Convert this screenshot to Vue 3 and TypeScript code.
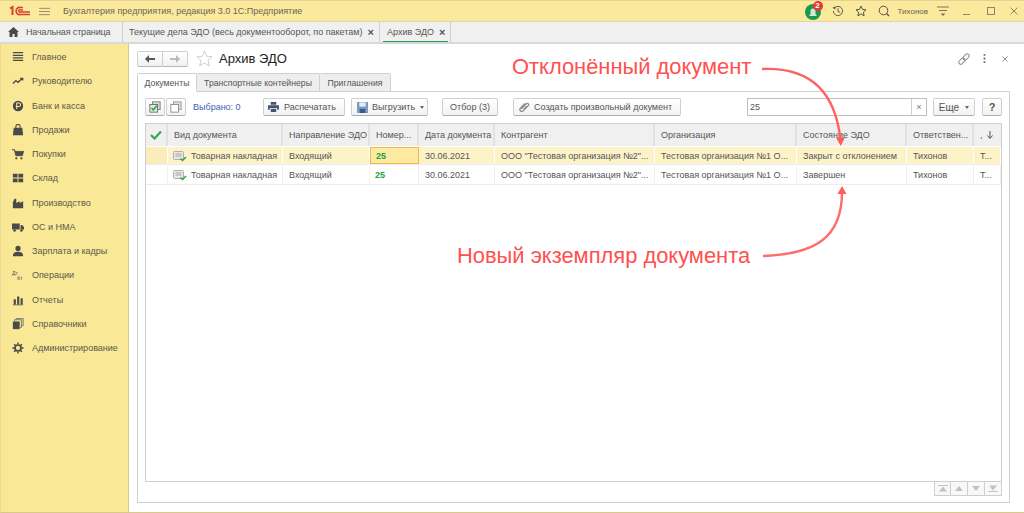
<template>
  <div class="app">
    <header class="titlebar">
      <svg class="logo" width="22" height="12" viewBox="0 0 22 12">
        <path d="M1 3.500 3.500 2V10" fill="none" stroke="#d6402f" stroke-width="2" />
        <path d="M21 9.500H11.500A3.600 3.600 0 1 1 11.500 2.500H14" fill="none" stroke="#d6402f" stroke-width="1.600" />
        <path d="M21 7H11.500A1.200 1.200 0 1 1 11.500 5H14" fill="none" stroke="#d6402f" stroke-width="1.400" />
      </svg>
      <svg class="burger" width="11" height="9" viewBox="0 0 12 10">
        <path d="M0 1.500H12M0 5H12M0 8.500H12" stroke="#8a856a" stroke-width="1" />
      </svg>
      <span class="app-title">Бухгалтерия предприятия, редакция 3.0 1С:Предприятие</span>
      <div class="spacer"></div>
      <div class="bell">
        <svg width="16" height="16" viewBox="0 0 16 16">
          <circle cx="8" cy="8" r="8" fill="#1b9a4b" />
          <path d="M4 12h8l-1.500-2V7a2.500 2.500 0 0 0-5 0v3z" fill="#cfe9d5" />
        </svg>
        <span class="badge">2</span>
      </div>
      <svg class="t-ico hist" width="12" height="12" viewBox="0 0 13 13">
        <path d="M2.500 3.500A5 5 0 1 1 1.500 6.500M6.500 3.500V7L9 8" fill="none" stroke="#55524a" stroke-width="1" />
        <path d="M0.500 3 3.500 1.500V5z" fill="#55524a" />
      </svg>
      <svg class="t-ico star" width="12" height="12" viewBox="0 0 12 12">
        <path d="M6 1 7.500 4.400 11 4.800 8.400 7.200 9.100 10.800 6 9 2.900 10.800 3.600 7.200 1 4.800 4.500 4.400z" fill="none" stroke="#55524a" />
      </svg>
      <svg class="t-ico find" width="12" height="12" viewBox="0 0 12 12">
        <circle cx="5.500" cy="5.500" r="4.300" fill="none" stroke="#55524a" />
        <path d="M8.500 8.500 11 11" stroke="#55524a" stroke-width="1.300" />
      </svg>
      <span class="user">Тихонов</span>
      <svg class="t-ico filter" width="12" height="10" viewBox="0 0 12 10">
        <path d="M0 1H12M2 4.500H10" stroke="#7a765e" />
        <path d="M3.500 7.500H8.500L6 10z" fill="#7a765e" />
      </svg>
      <svg class="t-ico win-min" width="7" height="7" viewBox="0 0 7 7"><path d="M0 6.500H7" stroke="#8a856a" /></svg>
      <svg class="t-ico win-max" width="8" height="8" viewBox="0 0 8 8"><rect x="0.500" y="0.500" width="7" height="7" fill="none" stroke="#8a856a" /></svg>
      <svg class="t-ico win-close" width="8" height="8" viewBox="0 0 8 8"><path d="M0.500 0.500 7.500 7.500M7.500 0.500 0.500 7.500" stroke="#8a856a" /></svg>
    </header>

    <nav class="tabbar">
      <div class="top-tab home">
        <svg width="11" height="10" viewBox="0 0 11 10">
          <path d="M5.500 0 11 5H9.500V10H6.500V7H4.500V10H1.500V5H0z" fill="#4a4a4a" />
        </svg>
        <span>Начальная страница</span>
      </div>
      <div class="top-tab docs">
        <span>Текущие дела ЭДО (весь документооборот, по пакетам)</span>
        <b class="x">×</b>
      </div>
      <div class="top-tab archive">
        <span>Архив ЭДО</span>
        <b class="x">×</b>
      </div>
    </nav>

    <div class="body">
      <aside class="sidebar">
        <div v-for="item in menu" :key="item.label" class="menu-row">
          <svg class="menu-ico" width="12" height="12" viewBox="0 0 14 14" v-html="item.icon"></svg>
          <span>{{ item.label }}</span>
        </div>
      </aside>

      <main class="content">
        <div class="form-head">
          <div class="nav-btns">
            <button class="nav-btn">
              <svg width="10" height="8" viewBox="0 0 10 8"><path d="M0 4 4 0V3H10V5H4V8z" fill="#555" /></svg>
            </button>
            <button class="nav-btn">
              <svg width="10" height="8" viewBox="0 0 10 8"><path d="M10 4 6 0V3H0V5H6V8z" fill="#bbb" /></svg>
            </button>
          </div>
          <svg class="fav" width="17" height="17" viewBox="0 0 17 17">
            <path d="M8.500 1 10.700 6.300 16 6.700 12 10.300 13.300 16 8.500 13 3.700 16 5 10.300 1 6.700 6.300 6.300z" fill="#fff" stroke="#cfcfcf" />
          </svg>
          <h1>Архив ЭДО</h1>
          <div class="spacer"></div>
          <svg class="head-ico" width="12" height="12" viewBox="0 0 12 12">
            <g transform="rotate(-45 6 6)" fill="none" stroke="#8a8a8a">
              <rect x="-0.500" y="4" width="7" height="4" rx="2" />
              <rect x="5.500" y="4" width="7" height="4" rx="2" />
            </g>
          </svg>
          <svg class="head-ico dots" width="3" height="9" viewBox="0 0 3 10">
            <path d="M0.500 0H2.500V2H0.500zM0.500 4H2.500V6H0.500zM0.500 8H2.500V10H0.500z" fill="#707070" />
          </svg>
          <svg class="head-ico close" width="6" height="6" viewBox="0 0 7 7"><path d="M0.500 0.500 6.500 6.500M6.500 0.500 0.500 6.500" stroke="#808080" /></svg>
        </div>

        <div class="form-tabs">
          <div class="form-tab active">Документы</div>
          <div class="form-tab">Транспортные контейнеры</div>
          <div class="form-tab">Приглашения</div>
        </div>

        <section class="panel">
          <div class="toolbar">
            <button class="btn square">
              <svg width="12" height="12" viewBox="0 0 14 14">
                <rect x="4" y="1" width="9" height="9" fill="#d8d8d8" stroke="#777" />
                <rect x="1" y="4" width="9" height="9" fill="#dff0dc" stroke="#666" />
                <path d="M3 8 5 10.500 9 5.500" fill="none" stroke="#2da14a" stroke-width="1.800" />
              </svg>
            </button>
            <button class="btn square second">
              <svg width="12" height="12" viewBox="0 0 14 14">
                <rect x="4" y="1" width="9" height="9" fill="#ddd" stroke="#999" />
                <rect x="1" y="4" width="9" height="9" fill="#fff" stroke="#888" />
              </svg>
            </button>
            <span class="selected">Выбрано: 0</span>
            <button class="btn print">
              <svg width="11" height="10" viewBox="0 0 12 11">
                <path d="M3 0H9V3H3zM0 3.500H12V8.500H10V6.500H2V8.500H0zM3 7.500H9V11H3z" fill="#43566e" />
              </svg>
              Распечатать
            </button>
            <button class="btn upload">
              <svg width="11" height="11" viewBox="0 0 12 12">
                <rect width="12" height="12" fill="#7a9cc4" />
                <rect x="2.500" y="0.500" width="7" height="4.500" fill="#e6edf5" />
                <rect x="3" y="7.500" width="6" height="4.500" fill="#3d5a80" />
              </svg>
              Выгрузить
              <i class="caret"></i>
            </button>
            <button class="btn filter-btn">Отбор (3)</button>
            <button class="btn create">
              <svg width="11" height="12" viewBox="0 0 11 12">
                <path d="M2 8 7.500 2.500A1.500 1.500 0 0 1 9.500 4.500L4 10A2 2 0 0 1 1 7.500L6 2.500M4.500 8.500 8 5" fill="none" stroke="#8a8a8a" stroke-width="1.200" />
              </svg>
              Создать произвольный документ
            </button>
            <div class="spacer"></div>
            <div class="search">
              <span class="search-val">25</span>
              <span class="search-x">×</span>
            </div>
            <button class="btn more">Еще <i class="caret"></i></button>
            <button class="btn help">?</button>
          </div>

          <div class="table">
            <div class="grid head-row">
              <div class="cell check">
                <svg width="12" height="10" viewBox="0 0 12 10"><path d="M1 5 4.500 8.500 11 1.500" fill="none" stroke="#35a84f" stroke-width="2.200" /></svg>
              </div>
              <div v-for="col in columns" :key="col" class="cell">{{ col }}</div>
              <div class="cell sort">
                ,
                <svg width="6" height="8" viewBox="0 0 6 8"><path d="M3 0V7M0.500 4.500 3 7.500 5.500 4.500" fill="none" stroke="#555" /></svg>
              </div>
            </div>
            <div v-for="(row, i) in rows" :key="i" class="grid row" :class="{ current: i === 0 }">
              <div class="cell check"></div>
              <div class="cell doc">
                <svg width="14" height="12" viewBox="0 0 14 12">
                  <rect x="0.500" y="1.500" width="10" height="8" rx="1" fill="#e8e8e8" stroke="#b0b0b0" />
                  <path d="M2.500 4H8.500M2.500 6H8.500" stroke="#a5a5a5" />
                  <path d="M7.500 8.500 9.500 10.500 13 7" fill="none" stroke="#2da14a" stroke-width="1.500" />
                </svg>
                Товарная накладная
              </div>
              <div class="cell">Входящий</div>
              <div class="cell num" :class="{ focus: i === 0 }">25</div>
              <div class="cell">30.06.2021</div>
              <div class="cell">ООО "Тестовая организация №2"...</div>
              <div class="cell">Тестовая организация №1 О...</div>
              <div class="cell">{{ row }}</div>
              <div class="cell">Тихонов</div>
              <div class="cell">Т...</div>
            </div>
          </div>
          <div class="pager">
            <button v-for="p in pager" :key="p" class="page-btn">
              <svg width="10" height="7" viewBox="0 0 10 7"><path :d="p" fill="#c2c2c2" /></svg>
            </button>
          </div>
        </section>
      </main>
    </div>

    <div class="note note-top">Отклонённый документ</div>
    <div class="note note-bottom">Новый экземпляр документа</div>
    <svg class="arrows" width="1024" height="513" viewBox="0 0 1024 513">
      <path d="M762 69C806 67 835 88 840.500 140" fill="none" stroke="#ff6060" stroke-width="2.400" />
      <path d="M836 137.500 845 137.500 840.700 146z" fill="#ff5c5c" />
      <path d="M763 256C815 254 842 238 842 192" fill="none" stroke="#ff6c6c" stroke-width="2.400" />
      <path d="M837.500 194 846.500 194 842 186z" fill="#ff5c5c" />
    </svg>
  </div>
</template>

<script setup lang="ts">
const menu = [
  { label: "Главное", icon: '<path d="M1 2H13M1 5H13M1 8H13M1 11H13" stroke="#4a4a4a" stroke-width="1.500"/>' },
  { label: "Руководителю", icon: '<path d="M1 10 4.500 6.500 7 8.500 12 4M9.500 4H12.500V6.500" fill="none" stroke="#4a4a4a" stroke-width="1.500"/>' },
  { label: "Банк и касса", icon: '<circle cx="7" cy="7" r="6" fill="#4a4a4a"/><path d="M5.500 10.500V3.500H8A2 2 0 0 1 8 7.500H4.500" fill="none" stroke="#f9e896" stroke-width="1.200"/>' },
  { label: "Продажи", icon: '<path d="M2 4.500H12L13 13H1z" fill="#4a4a4a"/><path d="M4.500 5V3A2.500 2.500 0 0 1 9.500 3V5" fill="none" stroke="#4a4a4a" stroke-width="1.200"/>' },
  { label: "Покупки", icon: '<path d="M0 2H3L3.500 4H13.500L12 9H4.500L3 3" fill="#4a4a4a" stroke="#4a4a4a"/><circle cx="5" cy="12" r="1.300" fill="#4a4a4a"/><circle cx="11" cy="12" r="1.300" fill="#4a4a4a"/>' },
  { label: "Склад", icon: '<path d="M1 2H6.500V6.500H1zM7.500 2H13V6.500H7.500zM1 7.500H6.500V12H1zM7.500 7.500H13V12H7.500z" fill="#4a4a4a"/>' },
  { label: "Производство", icon: '<path d="M1 13V6L3 2H5V7L9 5V7L13 5V13z" fill="#4a4a4a"/>' },
  { label: "ОС и НМА", icon: '<path d="M0 3H9V10H0zM10 5H12.500L14 7.500V10H10z" fill="#4a4a4a"/><circle cx="3" cy="11" r="1.500" fill="#4a4a4a"/><circle cx="11" cy="11" r="1.500" fill="#4a4a4a"/>' },
  { label: "Зарплата и кадры", icon: '<circle cx="7" cy="4" r="3" fill="#4a4a4a"/><path d="M1 13C1 9 4 8 7 8S13 9 13 13z" fill="#4a4a4a"/>' },
  { label: "Операции", icon: '<text x="0" y="6.500" font-size="6" font-family="Liberation Sans" fill="#4a4a4a">Дт</text><text x="6" y="12.500" font-size="6" font-family="Liberation Sans" fill="#4a4a4a">Кт</text>' },
  { label: "Отчеты", icon: '<path d="M2 6H4.500V12H2zM6 3H8.500V12H6zM10 5H12.500V12H10zM1 12.200H13V13H1z" fill="#4a4a4a"/>' },
  { label: "Справочники", icon: '<path d="M1 4H9V13H1z" fill="#4a4a4a"/><path d="M3 3.500V2H11V11H9.500M5 1.500V0.500H13V9H11.500" fill="none" stroke="#6a6a6a"/>' },
  { label: "Администрирование", icon: '<circle cx="7" cy="7" r="3.500" fill="none" stroke="#4a4a4a" stroke-width="2"/><path d="M7 0.500V3M7 11V13.500M0.500 7H3M11 7H13.500M2.500 2.500 4 4M10 10 11.500 11.500M2.500 11.500 4 10M10 4 11.500 2.500" stroke="#4a4a4a" stroke-width="1.700"/>' },
];

const columns = [
  "Вид документа",
  "Направление ЭДО",
  "Номер...",
  "Дата документа",
  "Контрагент",
  "Организация",
  "Состояние ЭДО",
  "Ответствен...",
];

const rows = ["Закрыт с отклонением", "Завершен"];

const pager = [
  "M0 0H10V1H0zM5 1.500 9 6.500H1z",
  "M5 1 9 6H1z",
  "M1 1H9L5 6z",
  "M1 0.500H9L5 5.500zM0 6H10V7H0z",
];
</script>

<style>
html,
body {
  margin: 0;
  overflow: hidden;
}
</style>

<style scoped>
.app {
  position: relative;
  width: 1024px;
  height: 513px;
  overflow: hidden;
  display: flex;
  flex-direction: column;
  background: #fff;
  color: #555;
  font: 9px "Liberation Sans", Arial, sans-serif;
}
.spacer {
  flex: 1;
}
button {
  font: inherit;
  color: inherit;
  padding: 0;
}
.titlebar {
  height: 22px;
  flex: none;
  display: flex;
  align-items: center;
  background: #fbe99e;
  border-top: 1px solid #e6d48e;
  border-bottom: 1px solid #e3d6a0;
  box-sizing: border-box;
}
.logo {
  margin-left: 9px;
}
.burger {
  margin-left: 8px;
}
.app-title {
  margin-left: 13px;
  color: #6b6650;
}
.bell {
  position: relative;
  width: 16px;
  height: 16px;
  margin-top: 2px;
}
.badge {
  position: absolute;
  left: 8px;
  top: -3px;
  width: 10px;
  height: 10px;
  border-radius: 50%;
  background: #e53935;
  color: #fff;
  font-size: 8px;
  font-weight: 700;
  line-height: 10px;
  text-align: center;
}
.t-ico.hist {
  margin-left: 11px;
}
.t-ico.star {
  margin-left: 11px;
}
.t-ico.find {
  margin-left: 11px;
}
.user {
  margin-left: 8px;
  font-size: 8px;
  color: #6b6650;
}
.t-ico.filter {
  margin-left: 9px;
}
.t-ico.win-min {
  margin-left: 14px;
}
.t-ico.win-max {
  margin-left: 17px;
}
.t-ico.win-close {
  margin-left: 15px;
  margin-right: 6px;
}
.tabbar {
  height: 22px;
  flex: none;
  display: flex;
  background: #f0f0f0;
  border-bottom: 2px solid #d8d8d8;
  box-sizing: border-box;
}
.top-tab {
  display: flex;
  align-items: center;
  border-right: 1px solid #cfcfcf;
  box-sizing: border-box;
  white-space: nowrap;
}
.top-tab.home {
  width: 123px;
  padding-left: 8px;
  gap: 7px;
  letter-spacing: -0.15px;
}
.top-tab.docs {
  width: 257px;
  padding-left: 6px;
  gap: 5px;
}
.top-tab.archive {
  width: 71px;
  padding-left: 7px;
  gap: 5px;
  position: relative;
}
.top-tab.archive::after {
  content: "";
  position: absolute;
  left: 3px;
  right: 2px;
  bottom: 0;
  height: 1px;
  background: #1f9a55;
}
.x {
  font-size: 11px;
  color: #555;
}
.body {
  flex: 1;
  min-height: 0;
  display: flex;
}
.sidebar {
  width: 129px;
  flex: none;
  box-sizing: border-box;
  padding-top: 1px;
  background: #f9e896;
  border-left: 1px solid #ead98f;
  border-right: 1px solid #d9c987;
  border-bottom: 1px solid #d9c987;
}
.menu-row {
  height: 24.25px;
  display: flex;
  align-items: center;
  gap: 8px;
  padding-left: 11px;
  color: #5c594c;
}
.content {
  flex: 1;
  min-width: 0;
  display: flex;
  flex-direction: column;
  padding: 0 14px 9px 8px;
  border-bottom: 1px solid #d9c987;
}
.form-head {
  height: 29px;
  flex: none;
  display: flex;
  align-items: center;
}
.nav-btns {
  display: flex;
}
.nav-btn {
  width: 26px;
  height: 16px;
  display: flex;
  align-items: center;
  justify-content: center;
  background: linear-gradient(#fff, #f1f1f1);
  border: 1px solid #cfcfcf;
  border-bottom-color: #b5b5b5;
}
.nav-btn + .nav-btn {
  width: 25px;
  border-left: none;
}
.nav-btn:first-child {
  border-radius: 2px 0 0 2px;
}
.nav-btn:last-child {
  border-radius: 0 2px 2px 0;
}
.fav {
  margin-left: 8px;
}
h1 {
  margin: 0 0 0 6px;
  font-size: 13px;
  font-weight: 400;
  color: #222;
}
.head-ico {
  margin-right: 13px;
}
.head-ico.dots {
  margin-right: 16px;
}
.head-ico.close {
  margin-right: 2px;
}
.form-tabs {
  height: 19px;
  flex: none;
  display: grid;
  grid-template-columns: 60px 123px 71px;
  position: relative;
  z-index: 1;
  font-size: 8.7px;
}
.form-tab {
  display: flex;
  align-items: center;
  justify-content: center;
  background: #eee;
  border: 1px solid #d0d0d0;
  border-left: none;
  border-radius: 2px 2px 0 0;
  box-sizing: border-box;
  white-space: nowrap;
}
.form-tab:first-child {
  border-left: 1px solid #d0d0d0;
}
.form-tab.active {
  background: #fff;
  border-bottom-color: #fff;
}
.panel {
  flex: 1;
  min-height: 0;
  display: flex;
  flex-direction: column;
  border: 1px solid #cfcfcf;
  margin-top: -1px;
  padding: 6px 7px 6px 7px;
}
.toolbar {
  height: 18px;
  flex: none;
  display: flex;
  align-items: center;
}
.btn {
  height: 18px;
  display: flex;
  align-items: center;
  justify-content: center;
  gap: 5px;
  box-sizing: border-box;
  background: linear-gradient(#fff, #f2f2f2);
  border: 1px solid #cfcfcf;
  border-bottom-color: #adadad;
  border-radius: 2px;
  white-space: nowrap;
}
.btn.square {
  width: 20px;
}
.btn.second {
  margin-left: 1px;
}
.selected {
  margin-left: 7px;
  width: 70px;
  color: #3a62b8;
}
.btn.print {
  width: 82px;
  justify-content: flex-start;
  padding-left: 4px;
  gap: 5px;
}
.btn.upload {
  width: 77px;
  margin-left: 6px;
  justify-content: flex-start;
  padding-left: 5px;
  gap: 4px;
}
.btn.filter-btn {
  width: 56px;
  margin-left: 14px;
}
.btn.create {
  width: 168px;
  margin-left: 15px;
  justify-content: flex-start;
  padding-left: 5px;
  gap: 4px;
}
.search {
  width: 180px;
  height: 18px;
  display: flex;
  box-sizing: border-box;
  border: 1px solid #bfbfbf;
}
.search-val {
  flex: 1;
  padding-left: 2px;
  line-height: 16px;
}
.search-x {
  width: 14px;
  text-align: center;
  line-height: 16px;
  border-left: 1px solid #cfcfcf;
  color: #777;
}
.btn.more {
  width: 42px;
  margin-left: 6px;
  font-size: 10px;
}
.btn.help {
  width: 20px;
  margin-left: 7px;
  font-size: 11px;
  font-weight: 700;
}
.caret {
  display: inline-block;
  border-left: 2.5px solid transparent;
  border-right: 2.5px solid transparent;
  border-top: 3px solid #666;
  margin-left: 1px;
}
.table {
  flex: 1;
  min-height: 0;
  margin-top: 7px;
  border: 1px solid #cfcfcf;
}
.grid {
  display: grid;
  grid-template-columns: 22px 115px 87px 49px 76px 160px 142px 110px 67px 27px;
}
.head-row {
  height: 22px;
  background: #f0f0f0;
}
.head-row .cell {
  border-right: 2px solid #e2e2e2;
}
.head-row .cell:last-child {
  border-right: none;
}
.row {
  height: 19px;
  border-top: 1px solid #fff;
  border-bottom: 1px solid #ececec;
  box-sizing: border-box;
}
.row + .row {
  height: 20px;
}
.row .cell {
  border-right: 1px solid #f0f0f0;
}
.row.current {
  background: #fdf3c8;
}
.row.current .cell {
  border-right-color: #fff;
}
.row.current .check {
  background: #fbedb9;
}
.cell {
  display: flex;
  align-items: center;
  padding-left: 6px;
  box-sizing: border-box;
  white-space: nowrap;
  overflow: hidden;
  min-width: 0;
}
.cell.check {
  justify-content: center;
  padding-left: 0;
}
.cell.doc {
  gap: 4px;
  padding-left: 5px;
}
.cell.num {
  color: #18a04c;
  font-weight: 700;
  padding-left: 5px;
}
.cell.focus {
  background: #fde9a0;
  border: 1px solid #e8bb4c !important;
}
.cell.sort {
  gap: 4px;
}
.pager {
  height: 14px;
  flex: none;
  display: flex;
  justify-content: flex-end;
}
.page-btn {
  width: 17px;
  display: flex;
  align-items: center;
  justify-content: center;
  background: #f8f8f8;
  border: 1px solid #cfcfcf;
  border-top: none;
  border-left: none;
  box-sizing: border-box;
}
.page-btn:first-child {
  border-left: 1px solid #cfcfcf;
}
.note {
  position: absolute;
  color: #ff5050;
  font-size: 21.9px;
  line-height: 24px;
  white-space: nowrap;
}
.note-top {
  left: 512px;
  top: 55px;
}
.note-bottom {
  left: 457px;
  top: 244px;
}
.arrows {
  position: absolute;
  left: 0;
  top: 0;
  pointer-events: none;
}
</style>
